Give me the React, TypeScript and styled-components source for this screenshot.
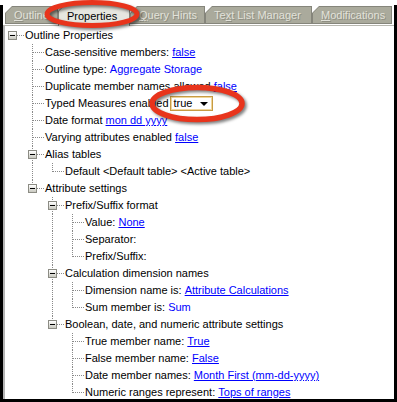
import React from "react"
import styled, { createGlobalStyle } from "styled-components"

type TreeNode = {
  label: React.ReactNode
  children?: TreeNode[]
}

const GlobalStyle = createGlobalStyle`
  html, body {
    margin: 0;
    padding: 0;
    background: #fff;
  }
  body {
    font-family: "Liberation Sans", Arial, sans-serif;
    font-size: 11px;
    color: #000;
  }
`

const Screen = styled.div`
  position: relative;
  width: 397px;
  height: 402px;
  padding-top: 5px;
  box-sizing: border-box;
  background: #fff;
  overflow: hidden;
`

const Window = styled.div`
  height: 397px;
  box-sizing: border-box;
  border: 3px solid #000;
  border-top: none;
  display: flex;
  flex-direction: column;
  overflow: hidden;
`

const TabStrip = styled.div`
  display: flex;
  align-items: flex-end;
  height: 21px;
  flex-shrink: 0;
  padding-left: 2px;
  box-sizing: border-box;
  border-bottom: 1px solid #b8b8b0;
`

const Tab = styled.div<{ $w: number; $active?: boolean }>`
  width: ${p => p.$w}px;
  height: ${p => (p.$active ? 22 : 18)}px;
  margin-bottom: ${p => (p.$active ? -1 : 1)}px;
  padding: 1px 1px ${p => (p.$active ? 0 : 1)}px 1px;
  box-sizing: border-box;
  flex-shrink: 0;
  background: #85857b;
  clip-path: polygon(7px 0, 100% 0, 100% 100%, 0 100%, 0 7px);
  position: relative;
  z-index: ${p => (p.$active ? 2 : 1)};
`

const TabFace = styled.div<{ $active?: boolean }>`
  height: 100%;
  display: flex;
  align-items: center;
  padding-left: 8px;
  box-sizing: border-box;
  white-space: nowrap;
  clip-path: polygon(6px 0, 100% 0, 100% 100%, 0 100%, 0 6px);
  background: ${p => (p.$active ? "#e6e6df" : "#aaaa9c")};
  color: ${p => (p.$active ? "#000" : "#e2e2da")};
  text-shadow: ${p => (p.$active ? "none" : "1px 1px 0 #8e8e82")};
`

const Panel = styled.div`
  flex: 1;
  display: flex;
  flex-direction: column;
  padding-top: 1px;
  border-left: 2px solid #b4b4b4;
  background: #fff;
  overflow: hidden;
`

const Row = styled.div`
  display: flex;
  height: 17px;
  flex-shrink: 0;
`

const dotsDown = "repeating-linear-gradient(to bottom, #8a8a8a 0 1px, transparent 1px 2px)"
const dotsRight = "repeating-linear-gradient(to right, #8a8a8a 0 1px, transparent 1px 2px)"

const Guide = styled.span<{ $on: boolean }>`
  width: 20px;
  flex-shrink: 0;
  background-image: ${p => (p.$on ? dotsDown : "none")};
  background-size: 1px 17px;
  background-position: 7px 0;
  background-repeat: no-repeat;
`

const Elbow = styled.span<{ $root?: boolean; $last?: boolean }>`
  width: 20px;
  flex-shrink: 0;
  display: flex;
  align-items: center;
  background-image: ${p => (p.$root ? dotsRight : `${dotsRight}, ${dotsDown}`)};
  background-size: ${p => (p.$root ? "12px 1px" : `12px 1px, 1px ${p.$last ? 9 : 17}px`)};
  background-position: ${p => (p.$root ? "8px 8px" : "8px 8px, 7px 0")};
  background-repeat: no-repeat;
`

const Expander = styled.span`
  width: 9px;
  height: 9px;
  margin-left: 3px;
  margin-top: -1px;
  box-sizing: border-box;
  border: 1px solid #8c8c84;
  background: linear-gradient(#ffffff, #c9c9c0);
  display: flex;
  align-items: center;
  justify-content: center;

  &::after {
    content: "";
    width: 5px;
    height: 1px;
    background: #000;
  }
`

const Label = styled.span`
  display: flex;
  align-items: center;
  white-space: pre;
  line-height: 17px;
`

const Value = styled.span<{ $link?: boolean }>`
  color: #0000ff;
  text-decoration: ${p => (p.$link ? "underline" : "none")};
`

const Select = styled.span`
  display: inline-flex;
  align-items: center;
  justify-content: space-between;
  width: 43px;
  height: 15px;
  margin-left: 1px;
  padding: 0 4px 0 3px;
  box-sizing: border-box;
  border: 1px solid #c79b43;
  box-shadow: inset 0 0 0 1px #f0d69a;
  background: #fff;
  line-height: 13px;
`

const Caret = styled.span`
  width: 0;
  height: 0;
  border-left: 4px solid transparent;
  border-right: 4px solid transparent;
  border-top: 4px solid #000;
`

const Callout = styled.svg<{ $x: number; $y: number }>`
  position: absolute;
  left: ${p => p.$x}px;
  top: ${p => p.$y}px;
  overflow: visible;
  pointer-events: none;
  filter: drop-shadow(2px 2px 1.5px rgba(0, 0, 0, 0.5));
  z-index: 5;
`

const item = (text: string, value?: string, link = true): TreeNode => ({
  label: (
    <>
      {text}
      {value && (
        <>
          {" "}
          <Value $link={link}>{value}</Value>
        </>
      )}
    </>
  ),
})

const tree: TreeNode[] = [
  {
    label: "Outline Properties",
    children: [
      item("Case-sensitive members:", "false"),
      item("Outline type:", "Aggregate Storage", false),
      item("Duplicate member names allowed", "false"),
      {
        label: (
          <>
            Typed Measures enabled
            <Select>
              true
              <Caret />
            </Select>
          </>
        ),
      },
      item("Date format", "mon dd yyyy"),
      item("Varying attributes enabled", "false"),
      {
        label: "Alias tables",
        children: [item("Default <Default table> <Active table>")],
      },
      {
        label: "Attribute settings",
        children: [
          {
            label: "Prefix/Suffix format",
            children: [item("Value:", "None"), item("Separator:"), item("Prefix/Suffix:")],
          },
          {
            label: "Calculation dimension names",
            children: [
              item("Dimension name is:", "Attribute Calculations"),
              item("Sum member is:", "Sum", false),
            ],
          },
          {
            label: "Boolean, date, and numeric attribute settings",
            children: [
              item("True member name:", "True"),
              item("False member name:", "False"),
              item("Date member names:", "Month First (mm-dd-yyyy)"),
              item("Numeric ranges represent:", "Tops of ranges"),
            ],
          },
        ],
      },
    ],
  },
]

const renderNodes = (nodes: TreeNode[], guides: boolean[], path: string): React.ReactNode[] =>
  nodes.flatMap((node, i) => {
    const last = i === nodes.length - 1
    const key = `${path}-${i}`
    const row = (
      <Row key={key}>
        {guides.map((on, k) => (
          <Guide key={k} $on={on} />
        ))}
        <Elbow $root={guides.length === 0} $last={last}>
          {node.children && <Expander />}
        </Elbow>
        <Label>{node.label}</Label>
      </Row>
    )
    const kids = node.children ? renderNodes(node.children, [...guides, !last], key) : []
    return [row, ...kids]
  })

const tabs = [
  { w: 53, label: <><u>O</u>utline</> },
  { w: 72, label: <>Properties</>, active: true },
  { w: 75, label: <><u>Q</u>uery Hints</> },
  { w: 107, label: <>Te<u>x</u>t List Manager</> },
  { w: 80, label: <><u>M</u>odifications</> },
]

export default function App() {
  return (
    <Screen>
      <GlobalStyle />
      <Window>
        <TabStrip>
          {tabs.map((t, i) => (
            <Tab key={i} $w={t.w} $active={t.active}>
              <TabFace $active={t.active}>{t.label}</TabFace>
            </Tab>
          ))}
        </TabStrip>
        <Panel>{renderNodes(tree, [], "n")}</Panel>
      </Window>
      <Callout $x={44} $y={0} width={96} height={28}>
        <ellipse cx={48} cy={14} rx={45} ry={11.5} fill="none" stroke="#e8341c" strokeWidth={5} />
      </Callout>
      <Callout $x={149} $y={85} width={98} height={38}>
        <ellipse cx={48} cy={18.5} rx={45} ry={16} fill="none" stroke="#e8341c" strokeWidth={5.5} />
      </Callout>
    </Screen>
  )
}
